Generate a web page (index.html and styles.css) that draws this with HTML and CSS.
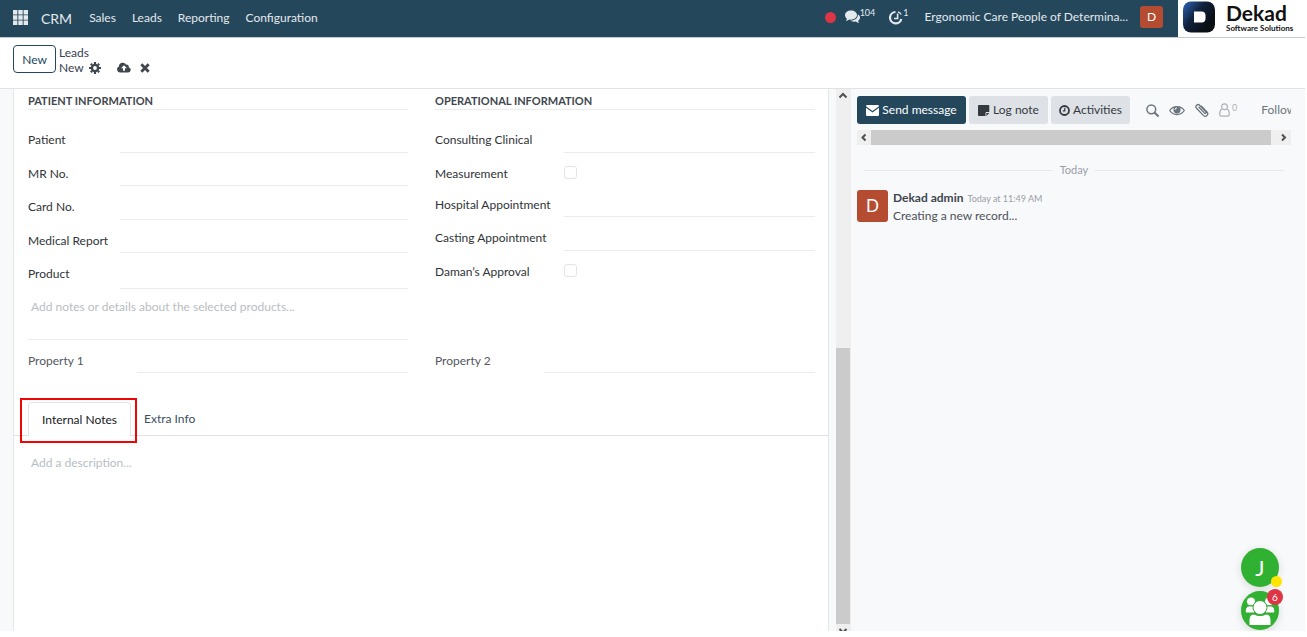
FILE: index.html
```html
<!DOCTYPE html>
<html lang="en">
<head>
<meta charset="utf-8">
<title>CRM - New lead</title>
<link rel="stylesheet" href="styles.css">
</head>
<body>
<div class="app">
  <header class="navbar">
    <button class="apps" aria-label="Apps">
      <svg width="15" height="15" viewBox="0 0 15 15" fill="currentColor"><path d="M0 0h4.4v4.4H0zM5.3 0h4.4v4.4H5.3zM10.6 0H15v4.4h-4.4zM0 5.3h4.4v4.4H0zM5.3 5.3h4.4v4.4H5.3zM10.6 5.3H15v4.4h-4.4zM0 10.6h4.4V15H0zM5.3 10.6h4.4V15H5.3zM10.6 10.6H15V15h-4.4z"/></svg>
    </button>
    <a class="brand" href="#">CRM</a>
    <nav class="menu">
      <a href="#">Sales</a>
      <a href="#">Leads</a>
      <a href="#">Reporting</a>
      <a href="#">Configuration</a>
    </nav>
    <div class="systray">
      <span class="record-dot"></span>
      <button class="tray" aria-label="Messages">
        <svg width="15" height="14" viewBox="0 0 15 14" fill="currentColor"><path d="M6 0.5c3.3 0 6 2 6 4.600s-2.700 4.600-6 4.600c-.6 0-1.200-.1-1.800-.2-.9.700-2 1.200-3.400 1.400.6-.7 1-1.400 1.100-2.200C.7 7.900 0 6.600 0 5.100 0 2.500 2.700.5 6 .5z"/><path d="M12.900 4.200c1.300.8 2.100 2 2.100 3.300 0 1.400-.8 2.500-1.900 3.300.2.800.6 1.500 1.200 2.200-1.400-.2-2.600-.7-3.500-1.400-1.900.4-4-.1-5.300-1.100 4 .1 7.600-2.200 7.400-6.300z"/></svg><sup>104</sup>
      </button>
      <button class="tray tray-activity" aria-label="Activities">
        <svg width="14" height="15" viewBox="0 0 14 15" fill="none" stroke="currentColor" stroke-width="2.200"><path d="M6.500 2A5.700 5.700 0 1 0 12.300 9"/><path d="M8.600 3.500v5H5" stroke-width="1.600"/><path d="M9 1.800c1.500.4 2.700 1.400 3.200 2.800" stroke-width="1.300"/></svg><sup>1</sup>
      </button>
      <span class="company">Ergonomic Care People of Determina...</span>
      <button class="avatar avatar-small">D</button>
    </div>
    <a class="logo" href="#">
      <svg width="32" height="32" viewBox="0 0 32 32"><defs><linearGradient id="lg" x1="0" y1="0.100" x2="0.800" y2="0.700"><stop offset="0" stop-color="#2a5fae"/><stop offset="0.500" stop-color="#10223c"/><stop offset="1" stop-color="#0b0f16"/></linearGradient></defs><rect width="32" height="31" y=".5" rx="8" fill="url(#lg)"/><path d="M11 10.500h7.500a4 4 0 0 1 4 4v3a4 4 0 0 1-4 4H11z" fill="#fff"/></svg>
      <span class="logo-text"><b>Dekad</b><small>Software Solutions</small></span>
    </a>
  </header>

  <section class="control">
    <button class="btn-new">New</button>
    <div class="crumbs">
      <a href="#">Leads</a>
      <div class="crumb-row">
        <span>New</span>
        <button class="icon" aria-label="Settings"><svg width="12" height="12" viewBox="0 0 12 12" fill="none" stroke="currentColor"><circle cx="6" cy="6" r="3.100" stroke-width="2.400"/><path stroke-width="2.200" d="M6 0v2M6 10v2M0 6h2M10 6h2M1.800 1.800l1.300 1.300M8.900 8.900l1.300 1.300M10.200 1.800L8.900 3.100M3.100 8.900l-1.300 1.300"/></svg></button>
        <button class="icon icon-save" aria-label="Save"><svg width="14" height="11" viewBox="0 0 14 11" fill="currentColor" fill-rule="evenodd"><path d="M3.200 10.500A3.200 3.200 0 0 1 1.900 4.400 3.900 3.900 0 0 1 9.200 2.700a2 2 0 0 1 2.500 2.500 2.700 2.700 0 0 1-.7 5.300zM7 3.200L4 6.300h2v2.500h2V6.300h2z"/></svg></button>
        <button class="icon" aria-label="Discard"><svg width="10" height="10" viewBox="0 0 10 10" stroke="currentColor" stroke-width="2.800"><path d="M1.300 1.300l7.400 7.400M8.700 1.300L1.300 8.700"/></svg></button>
      </div>
    </div>
  </section>

  <main class="content">
    <div class="form-view">
      <form class="sheet">
        <div class="groups">
          <section>
            <h2>Patient Information</h2>
            <div class="rows rows-left">
              <div class="field"><label for="patient">Patient</label><input type="text" id="patient"></div>
              <div class="field"><label for="mr">MR No.</label><input type="text" id="mr"></div>
              <div class="field"><label for="card">Card No.</label><input type="text" id="card"></div>
              <div class="field"><label for="medical">Medical Report</label><input type="text" id="medical"></div>
              <div class="field"><label for="product">Product</label><input type="text" id="product"></div>
            </div>
            <textarea class="notes" aria-label="Product notes" placeholder="Add notes or details about the selected products..."></textarea>
          </section>
          <section>
            <h2>Operational Information</h2>
            <div class="rows rows-right">
              <div class="field"><label for="clinical">Consulting Clinical</label><input type="text" id="clinical"></div>
              <div class="field"><label for="measure">Measurement</label><input type="checkbox" id="measure"></div>
              <div class="field"><label for="hospital">Hospital Appointment</label><input type="text" id="hospital"></div>
              <div class="field"><label for="casting">Casting Appointment</label><input type="text" id="casting"></div>
              <div class="field"><label for="daman">Daman’s Approval</label><input type="checkbox" id="daman"></div>
            </div>
          </section>
          <div class="field property"><label for="p1">Property 1</label><input type="text" id="p1"></div>
          <div class="field property"><label for="p2">Property 2</label><input type="text" id="p2"></div>
        </div>
        <div class="tabs">
          <button type="button" class="tab active">Internal Notes<span class="highlight"></span></button>
          <button type="button" class="tab">Extra Info</button>
        </div>
        <textarea class="description" aria-label="Description" placeholder="Add a description..."></textarea>
      </form>
      <div class="vscroll">
        <svg width="14" height="14" viewBox="0 0 14 14"><path d="M3.500 8.500L7 5l3.500 3.500" fill="none" stroke="#505050" stroke-width="2"/></svg>
        <div class="vthumb"></div>
        <svg width="14" height="7" viewBox="0 0 14 7"><path d="M3.500 5L7 8.500 10.500 5" fill="none" stroke="#505050" stroke-width="2"/></svg>
      </div>
    </div>

    <aside class="chatter">
      <div class="chat-actions">
        <button class="btn primary"><svg width="13" height="11" viewBox="0 0 13 11" fill="currentColor"><path d="M0 1.200Q0 0 1.200 0h10.600Q13 0 13 1.200L6.500 6.100z"/><path d="M0 2.700l6.500 4.800L13 2.700V9.800Q13 11 11.800 11H1.200Q0 11 0 9.800z"/></svg>Send message</button>
        <button class="btn"><svg width="12" height="11" viewBox="0 0 12 11" fill="currentColor"><path d="M.8 0H10.500q.8 0 .8.800V7H8.500Q7.500 7 7.500 8v3H.8Q0 11 0 10.200V.8Q0 0 .8 0zM8.400 8h2.900L8.400 10.900z"/></svg>Log note</button>
        <button class="btn"><svg width="11" height="11" viewBox="0 0 11 11" fill="none" stroke="currentColor"><circle cx="5.500" cy="5.500" r="4.500" stroke-width="1.800"/><path d="M5.800 2.800v3H3.800" stroke-width="1.200"/></svg>Activities</button>
        <div class="tools">
          <button class="tool" aria-label="Search"><svg width="13" height="13" viewBox="0 0 13 13" fill="none" stroke="currentColor" stroke-width="1.500"><circle cx="5.300" cy="5.300" r="4.400"/><path d="M8.500 8.500l4 4" stroke-width="2"/></svg></button>
          <button class="tool" aria-label="Watch"><svg width="16" height="11" viewBox="0 0 16 11"><path d="M.7 5.500C4 .2 12 .2 15.300 5.500 12 10.800 4 10.800.7 5.500z" fill="none" stroke="currentColor" stroke-width="1.300"/><circle cx="8" cy="4.800" r="3.600" fill="currentColor"/><path d="M6 4.800a2 2 0 0 1 2-2" fill="none" stroke="#f8f9fb"/></svg></button>
          <button class="tool" aria-label="Attach"><svg width="14" height="14" viewBox="0 0 14 14" fill="none" stroke="currentColor" stroke-width="1.300" stroke-linecap="round"><path d="M4 4.300l5.500 5.800c.9 1 2.200-.3 1.300-1.300L4.600 2.300C2.700.3-.4 3 1.500 5.200l6.800 7.200c2.500 2.400 6-.9 3.700-3.400L6.500 3.200"/></svg></button>
          <button class="tool followers" aria-label="Followers"><svg width="11" height="14" viewBox="0 0 11 14" fill="none" stroke="currentColor" stroke-width="1.200"><circle cx="5.500" cy="3.700" r="2.900"/><path d="M3 6C1.300 6.800.7 8.700.7 11c0 1.500.6 2.200 1.700 2.200h6.200c1.100 0 1.700-.7 1.700-2.200 0-2.300-.6-4.200-2.300-5"/></svg><sup>0</sup></button>
        </div>
        <button class="follow">Follow</button>
      </div>
      <div class="hscroll">
        <svg width="14" height="15" viewBox="0 0 14 15"><path d="M8.500 4.500l-3 3 3 3" fill="none" stroke="#505050" stroke-width="2"/></svg>
        <div class="hthumb"></div>
        <svg width="20" height="15" viewBox="0 0 20 15"><path d="M11 4.500l3 3-3 3" fill="none" stroke="#505050" stroke-width="2"/></svg>
      </div>
      <div class="day"><span>Today</span></div>
      <article class="message">
        <span class="avatar">D</span>
        <div>
          <div class="meta"><b>Dekad admin</b><time>Today at 11:49 AM</time></div>
          <p>Creating a new record...</p>
        </div>
      </article>
    </aside>
  </main>
  <div class="bubbles">
    <button class="bubble">J<span class="status"></span></button>
    <button class="bubble" aria-label="Group chat">
      <svg width="38" height="38" viewBox="0 0 38 38" fill="#fff" stroke="#35aa35" stroke-width="1"><circle cx="10" cy="9.500" r="4.500"/><circle cx="28" cy="9.500" r="4.500"/><path d="M4.500 21c-1-4 1-7 4-7h5v7zM33.500 21c1-4-1-7-4-7h-5v7z"/><circle cx="19" cy="15.500" r="7"/><path d="M8 33.500v-5c0-4 2-6.500 5-6.500 3.500 2 8.500 2 12 0 3 0 5 2.500 5 6.500v5z"/></svg>
      <span class="count">6</span>
    </button>
  </div>
</div>
</body>
</html>
```
FILE: styles.css
```css
* { box-sizing: border-box; }

body {
  margin: 0;
  background: #fff;
  color: #374151;
  font: 12px/18px Lato, "Open Sans", sans-serif;
}

button, input, textarea {
  margin: 0;
  padding: 0;
  border: 0;
  background: none;
  color: inherit;
  font: inherit;
}

a { color: inherit; text-decoration: none; }
svg { display: block; flex: none; }
sup { font-size: 9px; line-height: 9px; align-self: flex-start; }

.app {
  position: relative;
  display: flex;
  flex-direction: column;
  height: calc(100vh - 6px);
  margin-right: 2px;
  overflow: hidden;
}

/* Top bar */
.navbar {
  display: flex;
  align-items: center;
  flex: none;
  height: 38px;
  padding-left: 13px;
  background: #24475c;
  border-bottom: 1px solid #c3ccd2;
  color: #e4e9ec;
  white-space: nowrap;
}
.apps { margin-right: 13px; }
.apps svg { margin-bottom: 3px; }
.brand { margin-right: 17px; font-size: 14px; }
.menu { display: flex; gap: 16px; margin-bottom: 1px; }
.systray {
  display: flex;
  align-items: center;
  margin: 0 15px 3px auto;
}
.record-dot { width: 11px; height: 11px; margin-right: 9px; border-radius: 50%; background: #dc3545; }
.tray { display: flex; align-items: center; margin-right: 14px; }
.tray sup { margin-top: -2px; }
.tray-activity { margin-right: 16px; }
.company { margin-right: 12px; }
.avatar {
  display: flex;
  align-items: center;
  justify-content: center;
  flex: none;
  width: 31px;
  height: 32px;
  border-radius: 3px;
  background: #b54c31;
  color: #fff;
  font-size: 17px;
}
.avatar-small { width: 23px; height: 22px; font-size: 12px; }
.logo {
  display: flex;
  gap: 11px;
  width: 127px;
  height: 37px;
  padding: 1px 0 0 5px;
  background: #fff;
  color: #111;
}
.logo-text { display: flex; flex-direction: column; }
.logo-text b { font-size: 21px; line-height: 23px; }
.logo-text small { font-size: 8px; line-height: 9px; font-weight: bold; }

/* Control panel */
.control {
  display: flex;
  align-items: flex-start;
  gap: 3px;
  flex: none;
  height: 51px;
  padding: 7px 13px;
  border-bottom: 1px solid #dfe3e7;
}
.btn-new {
  width: 43px;
  height: 28px;
  padding-top: 1px;
  border: 1px solid #24475c;
  border-radius: 4px;
  color: #24475c;
}
.crumbs { line-height: 15px; }
.crumbs > a { display: block; }
.crumb-row { display: flex; align-items: center; }
.icon { margin-left: 5px; color: #3f464d; }
.icon-save { margin: 0 4px 0 16px; }

/* Content */
.content {
  display: grid;
  grid-template-columns: minmax(0, 1fr) 454px;
  flex: 1;
  min-height: 0;
  background: #f8f9fb;
}
.form-view { display: flex; min-height: 0; padding-left: 13px; }
.sheet {
  display: flex;
  flex-direction: column;
  flex: 1;
  min-width: 0;
  margin-right: 7px;
  border: 1px solid #e4e7ea;
  border-width: 0 1px;
  background: #fff;
}
.groups {
  display: grid;
  grid-template-columns: 1fr 1fr;
  column-gap: 27px;
  padding: 3px 13px 0 14px;
}
h2 {
  margin: 0 0 9px;
  border-bottom: 1px solid #eaecef;
  color: #40464d;
  font-size: 11px;
  line-height: 17px;
  text-transform: uppercase;
}
.rows { display: grid; }
.rows-left { grid-template-rows: 34px 33px 34px 33px 36px; }
.rows-right { grid-template-rows: 34px 31px 33px 34px 32px; }
.field { display: grid; grid-template-columns: 92px 1fr; color: #303338; }
.rows-right .field { grid-template-columns: 129px 1fr; }
.field label { padding-top: 12px; white-space: nowrap; }
.field input[type="text"] { min-width: 0; border-bottom: 1px solid #eaecef; }
.field input[type="checkbox"] {
  appearance: none;
  width: 13px;
  height: 13px;
  margin-top: 13px;
  border: 1px solid #e2e5e8;
  border-radius: 3px;
}
.field.property { grid-template-columns: 109px 1fr; height: 33px; color: #545960; }

textarea { resize: none; }
textarea::placeholder { color: #b8bdc3; }
.notes {
  display: block;
  width: 100%;
  height: 51px;
  padding: 9px 3px;
  border-bottom: 1px solid #eaecef;
}
.tabs {
  display: flex;
  margin-top: 29px;
  padding-left: 14px;
  border-bottom: 1px solid #dfe2e5;
}
.tab {
  position: relative;
  height: 33px;
  padding: 0 13px;
  color: #3b4f5f;
}
.tab.active {
  width: 103px;
  height: 34px;
  margin-bottom: -1px;
  border: 1px solid #e2e5e8;
  border-bottom: 0;
  border-radius: 4px 4px 0 0;
  background: #fff;
  color: #15181b;
  white-space: nowrap;
}
.highlight {
  position: absolute;
  inset: -5px -7px -7px -9px;
  border: 2px solid #f00505;
}
.description { flex: 1; padding: 18px 17px; }

.vscroll {
  display: flex;
  flex-direction: column;
  flex: none;
  width: 15px;
  padding-right: 1px;
  background: #efefef;
}
.vthumb { height: 51%; margin-top: auto; background: #cbcbcb; }

/* Chatter */
.chatter { min-width: 0; padding: 7px 14px 0 6px; }
.chat-actions {
  display: flex;
  align-items: center;
  height: 28px;
  overflow: hidden;
  white-space: nowrap;
}
.btn {
  display: flex;
  align-items: center;
  justify-content: center;
  gap: 3px;
  flex: none;
  width: 79px;
  height: 28px;
  margin-right: 3px;
  border-radius: 3px;
  background: #dee1e6;
  color: #343a40;
}
.btn.primary { width: 109px; background: #24475c; color: #fff; }
.tools { display: flex; align-items: center; gap: 10px; margin: 0 24px 0 13px; }
.tool { display: flex; flex: none; color: #6c757d; }
.tool.followers { gap: 2px; color: #adb2b8; }
.follow { flex: none; color: #6c757d; }
.hscroll { display: flex; height: 15px; margin-top: 6px; background: #efefef; }
.hthumb { flex: 1; background: #cbcbcb; }
.day {
  display: flex;
  align-items: center;
  gap: 7px;
  margin: 16px 7px 0;
  color: #9a9fa5;
  font-size: 11px;
}
.day::before, .day::after { content: ""; flex: 1; height: 1px; background: #e7e9ec; }
.message { display: flex; gap: 5px; margin-top: 11px; color: #4b5158; }
.message p { margin: 0; }
.meta { display: flex; align-items: baseline; gap: 4px; line-height: 16px; }
.meta b { font-size: 12px; color: #3f464d; }
.meta time { color: #9a9fa5; font-size: 9px; }

/* Chat bubbles */
.bubbles {
  position: absolute;
  right: 26px;
  bottom: 1px;
  display: flex;
  flex-direction: column;
  gap: 4px;
}
.bubble {
  position: relative;
  width: 38px;
  height: 39px;
  border-radius: 50%;
  background: #30b132;
  box-shadow: 0 2px 8px #0002;
  color: #fff;
  font-size: 22px;
}
.status {
  position: absolute;
  right: -3px;
  bottom: 0;
  width: 11px;
  height: 11px;
  border-radius: 50%;
  background: #ffe500;
}
.count {
  position: absolute;
  top: -2px;
  right: -4px;
  width: 16px;
  border-radius: 8px;
  background: #dc3545;
  font-size: 10px;
  line-height: 16px;
}
```
